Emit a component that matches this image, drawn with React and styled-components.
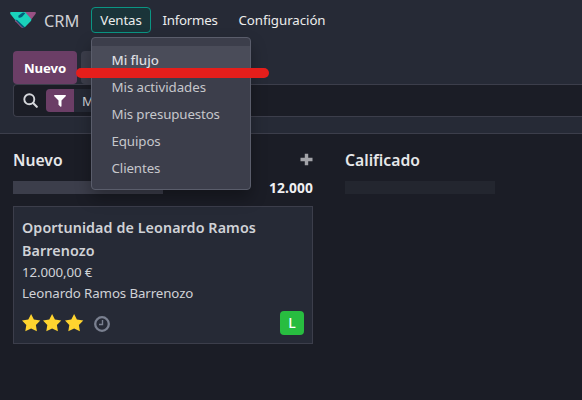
import React from "react";
import styled, { createGlobalStyle } from "styled-components";

const GlobalStyle = createGlobalStyle`
  * { box-sizing: border-box; }
  body {
    margin: 0;
    overflow: hidden;
    background: #1b1d26;
    color: #d5d7db;
    font-family: "Noto Sans", "Open Sans", sans-serif;
    font-size: 13.3px;
  }
`;

const Page = styled.div`
  position: relative;
  width: 582px;
  height: 400px;
  overflow: hidden;
  background: #1b1d26;
`;

const Header = styled.header`
  height: 134px;
  background: #262a36;
  border-bottom: 1px solid #3c3e4b;
`;

const Navbar = styled.nav`
  display: flex;
  align-items: center;
  height: 40px;
  padding-left: 10px;
`;

const Logo = styled.svg`
  display: block;
  width: 26px;
  height: 16px;
`;

const Brand = styled.span`
  width: 47px;
  margin-left: 8px;
  font-size: 16.4px;
  letter-spacing: -0.05px;
  color: #cfd0d4;
`;

const NavItem = styled.div`
  position: relative;
  display: flex;
  align-items: center;
  justify-content: center;
  width: ${(p) => p.$width}px;
  height: 26px;
  margin-right: ${(p) => p.$gap || 0}px;
  border: 1px solid ${(p) => (p.$active ? "#0b9583" : "transparent")};
  border-radius: 4px;
  background: ${(p) => (p.$active ? "#1a3439" : "transparent")};
  color: #eceded;
  letter-spacing: ${(p) => p.$spacing || 0}px;
  white-space: nowrap;
`;

const Menu = styled.div`
  position: absolute;
  z-index: 2;
  top: 29px;
  left: -1px;
  width: 160px;
  height: 153px;
  padding-top: 8px;
  border: 1px solid #5a5d6b;
  border-radius: 4px;
  background: #3c3e4b;
  box-shadow: 0 8px 16px rgba(0, 0, 0, 0.3);
`;

const MenuItem = styled.div`
  height: 27px;
  padding-left: 19.5px;
  line-height: 28px;
  font-weight: ${(p) => (p.$active ? 500 : 400)};
  letter-spacing: ${(p) => p.$spacing || 0}px;
  color: ${(p) => (p.$active ? "#dcdde0" : "#c6c7cb")};
  background: ${(p) => (p.$active ? "#4a4c59" : "transparent")};
`;

const Actions = styled.div`
  display: flex;
  gap: 4px;
  margin-top: 11px;
  padding-left: 13px;
`;

const Button = styled.button`
  width: ${(p) => p.$width}px;
  height: 33px;
  padding: 0;
  border: 0;
  border-radius: 4px;
  background: ${(p) => (p.$primary ? "#6b3e66" : "#3c3e4b")};
  color: #fff;
  font: 700 13.2px "Noto Sans", sans-serif;
  letter-spacing: -0.1px;
`;

const Search = styled.div`
  display: flex;
  align-items: center;
  height: 33px;
  margin-left: 13px;
  padding-left: 9px;
  border: 1px solid #3c3e4b;
  border-right: 0;
  border-radius: 4px 0 0 4px;
  background: #1b1d26;
`;

const Facet = styled.div`
  display: flex;
  height: 23px;
  margin-left: 8px;
  border-radius: 4px;
  overflow: hidden;
  background: #262a36;
`;

const FacetIcon = styled.div`
  display: flex;
  align-items: center;
  justify-content: center;
  width: 28px;
  background: #6b3e66;
`;

const FacetLabel = styled.span`
  width: 70px;
  padding-left: 8px;
  line-height: 25px;
`;

const Board = styled.main`
  display: grid;
  grid-template-columns: 300px 237px;
  column-gap: 32px;
  padding-left: 13px;
`;

const ColumnHead = styled.div`
  display: flex;
  align-items: center;
  justify-content: space-between;
  height: 31px;
  margin-top: 10px;
  margin-bottom: 1px;
`;

const ColumnTitle = styled.h2`
  margin: 0;
  font-size: 15.7px;
  font-weight: 600;
  color: #e6e7e9;
`;

const Progress = styled.div`
  display: flex;
  align-items: center;
  justify-content: space-between;
  height: 23px;
`;

const Bar = styled.div`
  width: 150px;
  height: 13px;
  background: ${(p) => (p.$empty ? "#23262f" : "#3c3e4b")};
`;

const Total = styled.strong`
  font-size: 13.8px;
  font-weight: 700;
  letter-spacing: 0.1px;
  color: #f0f0f2;
`;

const Card = styled.article`
  height: 138px;
  margin-top: 7px;
  padding: 9px 8px 8px;
  border: 1px solid #3c3e4b;
  background: #262a36;
`;

const CardTitle = styled.div`
  font-size: 14.3px;
  font-weight: 600;
  line-height: 23px;
  letter-spacing: 0.09px;
  color: #d0d2d7;
`;

const CardLine = styled.div`
  line-height: 21px;
  letter-spacing: -0.11px;
  color: #d0d2d7;
`;

const CardFooter = styled.div`
  display: flex;
  align-items: center;
  height: 24px;
  margin-top: 7px;
`;

const Star = styled.svg`
  width: 19px;
  height: 18px;
  margin-right: 2.4px;
`;

const Clock = styled.svg`
  width: 16px;
  height: 16px;
  margin: 2px auto 0 8px;
`;

const Avatar = styled.div`
  width: 24px;
  height: 24px;
  border-radius: 4px;
  background: #28bd40;
  color: #fff;
  font: 500 14px/24px "Noto Sans", sans-serif;
  text-align: center;
`;

const RedStroke = styled.div`
  position: absolute;
  z-index: 3;
  top: 68px;
  left: 76px;
  width: 193px;
  height: 10px;
  border-radius: 5px;
  background: #e51e1b;
`;

const menuItems = [
  { label: "Mi flujo", active: true, spacing: -0.05 },
  { label: "Mis actividades", spacing: -0.05 },
  { label: "Mis presupuestos", spacing: -0.12 },
  { label: "Equipos", spacing: -0.1 },
  { label: "Clientes", spacing: -0.1 },
];

export default function App() {
  return (
    <Page>
      <GlobalStyle />
      <Header>
        <Navbar>
          <Logo viewBox="0 0 26 16">
            <path d="M14 0H24.7Q26.8 0 25.3 2.2L20.5 8.5L13 2Z" fill="#985184" />
            <path d="M5 7L5.3 9.3L11 15.2Q12.5 16.5 14 15.5L13.5 13Z" fill="#985184" />
            <path d="M1.3 0H15L20.8 6.4Q22 8 20.7 9.2L14.8 15.2L5.2 8L.6 2.3Q-.7 0 1.3 0Z" fill="#1ad3bb" />
            <path d="M5 7.4L7.2 8L14.8 15.2L13.3 16L11.8 14.8Z" fill="#005e7a" />
            <path d="M8.3 3.8L12.4.7Q14.2.1 15.2 1.3L12.2 4.7Q9.7 6.5 8.5 5.4Z" fill="#005e7a" />
          </Logo>
          <Brand>CRM</Brand>
          <NavItem $active $width={60} $gap={9} $spacing={-0.1}>
            Ventas
            <Menu>
              {menuItems.map((item) => (
                <MenuItem key={item.label} $active={item.active} $spacing={item.spacing}>
                  {item.label}
                </MenuItem>
              ))}
            </Menu>
          </NavItem>
          <NavItem $width={60} $gap={18} $spacing={-0.25}>Informes</NavItem>
          <NavItem $width={88} $spacing={-0.06}>Configuración</NavItem>
        </Navbar>
        <Actions>
          <Button $primary $width={64}>Nuevo</Button>
          <Button $width={80} aria-hidden="true" />
        </Actions>
        <Search>
          <svg width="15" height="15" viewBox="0 0 15 15" fill="none" stroke="#d5d7db">
            <circle cx="6.3" cy="6.3" r="5" strokeWidth="1.9" />
            <path d="M10.1 10.1L13.8 13.8" strokeWidth="2.1" strokeLinecap="round" />
          </svg>
          <Facet>
            <FacetIcon>
              <svg width="12" height="12" viewBox="0 0 12 12">
                <path d="M.6 0H11.4Q12.2.5 11.7 1.2L7.5 5.5V11.3Q7.2 12 6.5 11.7L4.5 9.8V5.5L.3 1.2Q-.2.5.6 0Z" fill="#fff" />
              </svg>
            </FacetIcon>
            <FacetLabel>M</FacetLabel>
          </Facet>
        </Search>
      </Header>
      <Board>
        <section>
          <ColumnHead>
            <ColumnTitle>Nuevo</ColumnTitle>
            <svg width="13" height="13" viewBox="0 0 13 13">
              <path d="M4.8.7H8.2V4.8H12.5V8.2H8.2V12.3H4.8V8.2H.5V4.8H4.8Z" fill="#a2a3a8" />
            </svg>
          </ColumnHead>
          <Progress>
            <Bar />
            <Total>12.000</Total>
          </Progress>
          <Card>
            <CardTitle>Oportunidad de Leonardo Ramos Barrenozo</CardTitle>
            <CardLine>12.000,00 €</CardLine>
            <CardLine>Leonardo Ramos Barrenozo</CardLine>
            <CardFooter>
              {[0, 1, 2].map((n) => (
                <Star key={n} viewBox="0 0 19 18">
                  <path d="M9.1.1L11.9 5.5L18.3 6.4L13.9 10.9L14.9 17.3L9.1 14.4L3.3 17.3L4.3 10.9L-.1 6.4L6.3 5.5Z" fill="#ffd42f" />
                </Star>
              ))}
              <Clock viewBox="0 0 16 16" fill="none" stroke="#7a8090">
                <circle cx="8" cy="8" r="6.8" strokeWidth="2.3" />
                <path d="M8.5 4V8.5H5" strokeWidth="1.4" />
              </Clock>
              <Avatar>L</Avatar>
            </CardFooter>
          </Card>
        </section>
        <section>
          <ColumnHead>
            <ColumnTitle>Calificado</ColumnTitle>
          </ColumnHead>
          <Progress>
            <Bar $empty />
          </Progress>
        </section>
      </Board>
      <RedStroke />
    </Page>
  );
}
